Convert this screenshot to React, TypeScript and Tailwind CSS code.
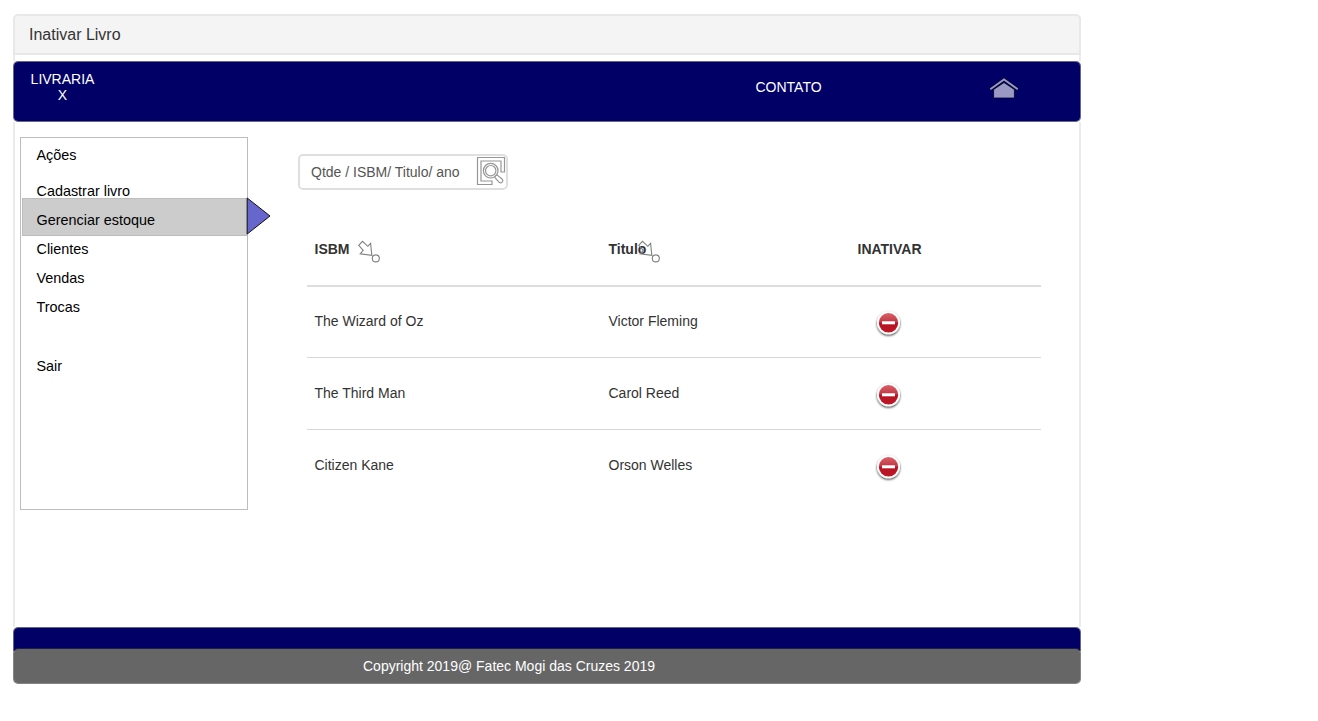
import React from "react";

const menu = [
  { label: "Ações", cls: "h-[33px]" },
  { label: "Cadastrar livro", cls: "pt-[12px] h-[27px]" },
  { label: "Gerenciar estoque", cls: "h-[38px]", active: true },
  { label: "Clientes", cls: "mt-px h-[24px]" },
  { label: "Vendas", cls: "mt-[2px] h-[29px]" },
  { label: "Trocas", cls: "h-[29px]" },
  { label: "Sair", cls: "mt-[30px] h-[29px]" },
];

const rows = [
  { title: "The Wizard of Oz", person: "Victor Fleming", cls: "h-[71px] border-b pb-px" },
  { title: "The Third Man", person: "Carol Reed", cls: "h-[72px] border-b pb-px" },
  { title: "Citizen Kane", person: "Orson Welles", cls: "h-[71px] pb-px" },
];

function HomeIcon() {
  return (
    <svg width="30" height="22" viewBox="0 0 30 22" className="block">
      <path d="M4.600 11.500 15 4.500l10.400 7v8.500H4.600Z" fill="#9999c4" stroke="#000028" strokeWidth=".8" />
      <path d="M1.300 11.200 15 1.500l13.700 9.700" fill="none" stroke="#000028" strokeWidth="3.200" />
      <path d="M1.300 11.200 15 1.500l13.700 9.700" fill="none" stroke="#9999c4" strokeWidth="1.900" />
    </svg>
  );
}

function SearchIcon() {
  return (
    <svg width="30" height="30" viewBox="0 0 30 30" className="block" fill="none" stroke="#969696" strokeWidth="1.2">
      <path d="M1.500 1.500h27v14.500H25V5H5v20h11v3.500H1.500Z" />
      <circle cx="14.700" cy="14.700" r="7.300" />
      <circle cx="14.700" cy="14.700" r="5.200" />
      <path d="M19.300 21.800c-.9-1.600.9-3.200 2.300-2.400l4.700 3.800c1.600 1.800-.8 4.700-2.900 3.400Z" fill="#fff" />
    </svg>
  );
}

function SortIcon() {
  return (
    <svg width="24" height="24" viewBox="0 0 24 24" className="block" fill="none" stroke="#808080" strokeWidth="1.1">
      <path d="M1.700 6.300 5.500 2.300l5.300 5 2.800-3 1.200 12L3.200 14.800l3-3.500Z" />
      <circle cx="18.800" cy="19.400" r="3.500" />
    </svg>
  );
}

function RemoveIcon() {
  return (
    <svg width="32" height="32" viewBox="0 0 32 32" className="block">
      <defs>
        <linearGradient id="removeRed" x1="0" y1="0" x2="0" y2="1">
          <stop offset="0" stopColor="#d8606a" />
          <stop offset=".48" stopColor="#c23541" />
          <stop offset=".52" stopColor="#b51220" />
          <stop offset="1" stopColor="#bf1828" />
        </linearGradient>
        <filter id="removeShadow" x="-20%" y="-20%" width="150%" height="150%">
          <feDropShadow dx="0" dy="1.2" stdDeviation="1.2" floodColor="#000" floodOpacity=".8" />
        </filter>
      </defs>
      <circle cx="15.500" cy="15.800" r="11.500" fill="#fff" filter="url(#removeShadow)" />
      <circle cx="15.500" cy="15.800" r="9.700" fill="url(#removeRed)" />
      <rect x="9" y="14.300" width="13" height="3" fill="#fff" />
    </svg>
  );
}

export default function App() {
  return (
    <div className="h-[721px] w-[1318px] overflow-hidden bg-white pt-[14px] pl-[13px] font-['Liberation_Sans',Arial,sans-serif] text-[14px] text-[#333333]">
      <div className="flex w-[1068px] flex-col">
        <header className="flex h-[41px] items-center rounded-t-[5px] border-2 border-[#e8e8e8] bg-[#f4f4f4] pl-[14px] text-[16px]">
          Inativar Livro
        </header>
        <div className="h-[6px] border-x-2 border-[#ebebeb]" />
        <nav className="flex h-[61px] rounded-[5px] border border-[#000033]/60 bg-[#000066] bg-clip-padding text-white">
          <div className="mt-[9px] ml-[16px] w-[65px] text-center leading-[16px]">
            LIVRARIA
            <br />X
          </div>
          <a className="mt-[17px] ml-[660.5px] w-[67px] leading-[16px]">CONTATO</a>
          <a className="mt-[16px] ml-[166.5px]">
            <HomeIcon />
          </a>
        </nav>

        <main className="flex h-[505px] border-x-2 border-[#ebebeb] pt-[15px] pl-[5px]">
          <aside className="relative h-[373px] w-[228px] border border-[#bdbdbd] text-[14.4px] text-black">
            <ul className="flex flex-col">
              {menu.map((item) => (
                <li
                  key={item.label}
                  className={
                    item.active
                      ? `${item.cls} ml-px flex items-center border border-[#bdbdbd] bg-[#cccccc] pt-[5px] pl-[13.5px]`
                      : `${item.cls} flex items-center pl-[15.5px]`
                  }
                >
                  <span className="leading-[16px]">{item.label}</span>
                </li>
              ))}
            </ul>
            <svg width="25" height="38" viewBox="0 0 25 38" className="absolute top-[59px] left-[225px]">
              <path d="M1.200 1v36L24 19Z" fill="#6666cc" stroke="#111" strokeWidth="1" />
            </svg>
          </aside>

          <section className="ml-[50px] w-[743px] pt-[17px]">
            <div className="flex h-[36px] w-[210px] items-center justify-between rounded-[5px] border-2 border-[#dfdfdf] pl-[11px] text-[#555555]">
              <span>Qtde / ISBM/ Titulo/ ano</span>
              <span className="-mt-[2px]">
                <SearchIcon />
              </span>
            </div>
            <div className="mt-[23px] ml-[9px] w-[734px]">
              <div className="grid h-[74px] grid-cols-[294px_249px_191px] items-center border-b-2 border-[#dddddd] font-bold">
                <div className="flex h-[24px] items-center pl-[7.500px]">
                  <span className="w-[43.500px]">ISBM</span>
                  <span className="mt-[4px] -ml-px">
                    <SortIcon />
                  </span>
                </div>
                <div className="flex h-[24px] items-center pl-[7.500px]">
                  <span className="w-[29.500px]">Titulo</span>
                  <span className="z-10 mt-[4px] -ml-px">
                    <SortIcon />
                  </span>
                </div>
                <div className="pl-[7.500px]">INATIVAR</div>
              </div>
              {rows.map((row) => (
                <div
                  key={row.title}
                  className={`${row.cls} grid grid-cols-[294px_249px_191px] items-center border-[#d8d8d8]`}
                >
                  <div className="pl-[7.500px]">{row.title}</div>
                  <div className="pl-[7.500px]">{row.person}</div>
                  <div className="pt-[3px] pl-[22.500px]">
                    <RemoveIcon />
                  </div>
                </div>
              ))}
            </div>
          </section>
        </main>

        <div className="h-[24px] rounded-t-[5px] border border-b-0 border-[#000033]/60 bg-[#000066] bg-clip-padding" />
        <footer className="z-10 -mt-[3px] flex h-[36px] items-center justify-center rounded-[5px] border border-[#333333]/60 bg-[#666666] bg-clip-padding pr-[76px] text-white">
          Copyright 2019@ Fatec Mogi das Cruzes 2019
        </footer>
      </div>
    </div>
  );
}
